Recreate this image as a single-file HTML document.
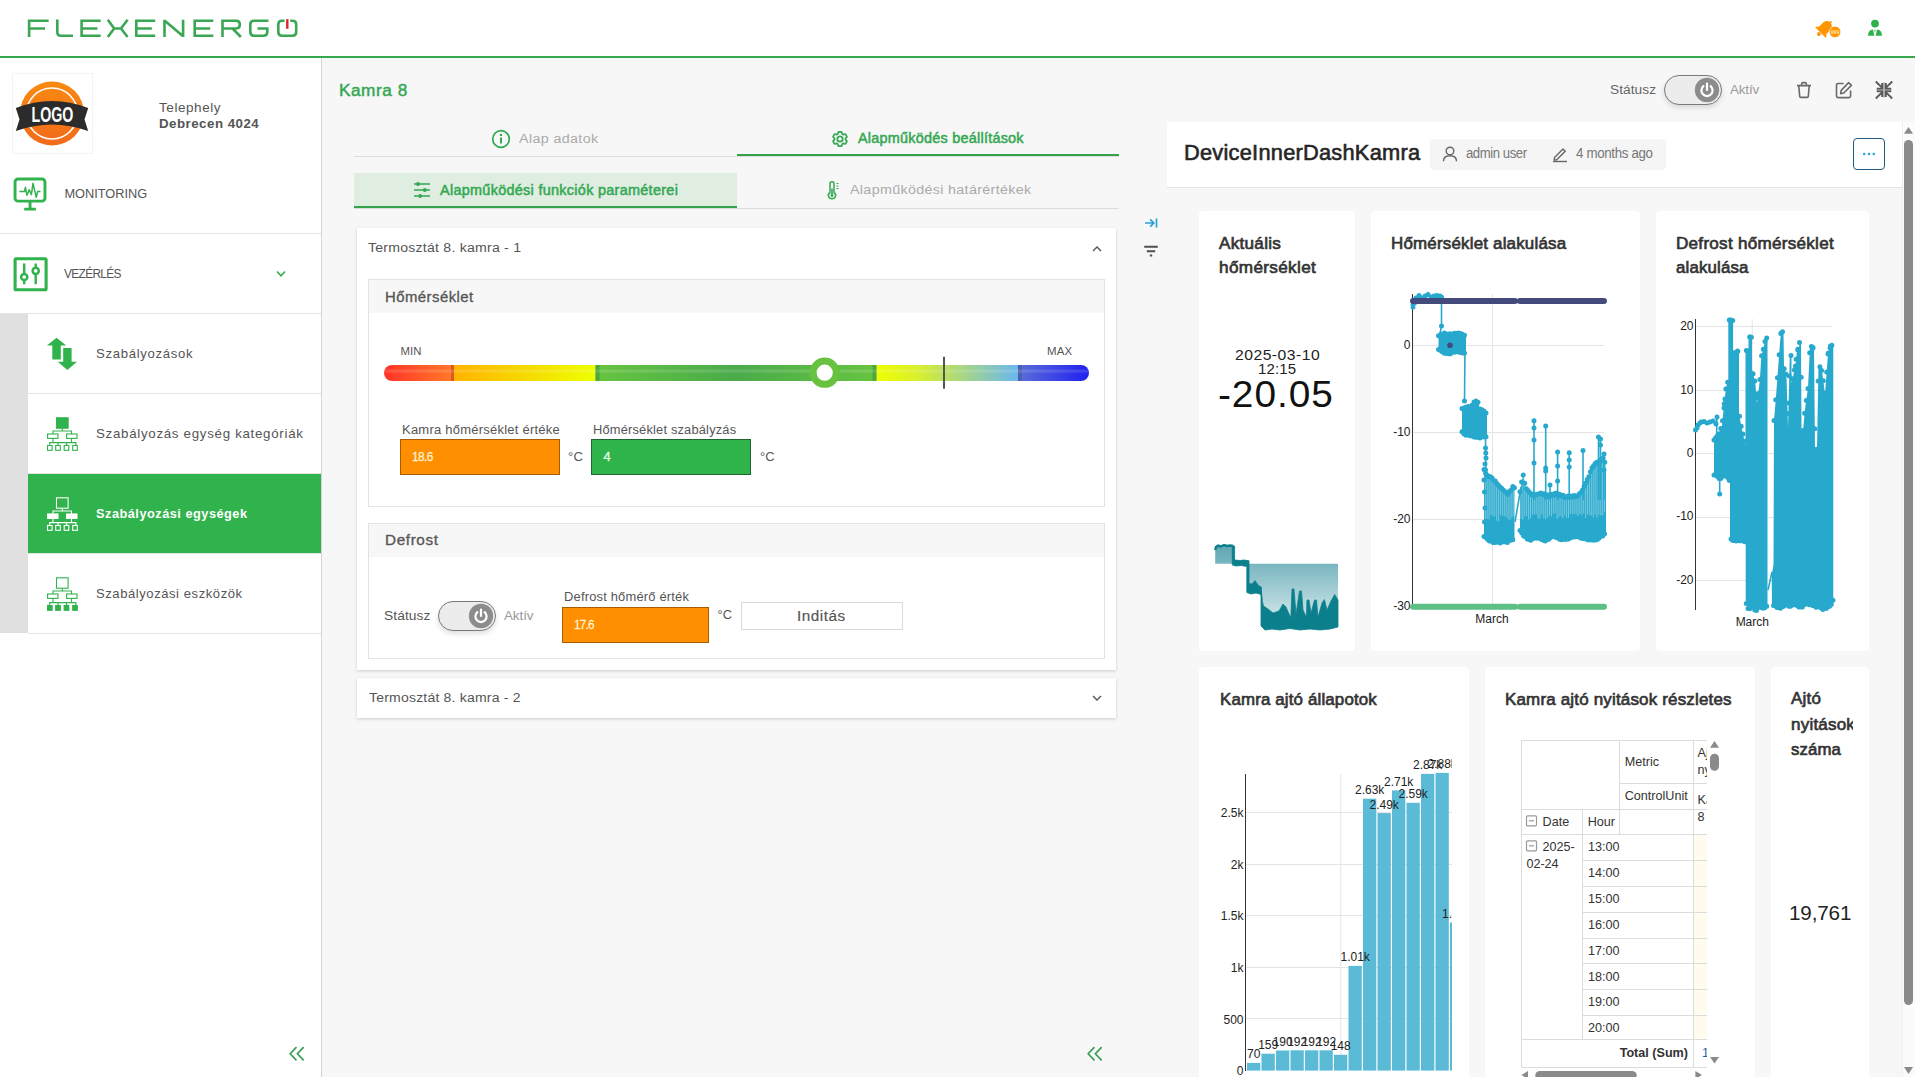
<!DOCTYPE html>
<html><head><meta charset="utf-8">
<style>
*{box-sizing:border-box;margin:0;padding:0}
html,body{width:1915px;height:1077px;overflow:hidden;background:#f7f7f7;font-family:"Liberation Sans",sans-serif;color:#444}
div{position:absolute}
.t{white-space:nowrap}
svg{position:absolute;overflow:visible}
</style></head>
<body>
<div style="left:0;top:0;width:1915px;height:56px;background:#fff"></div><div style="left:0;top:56px;width:1915px;height:2px;background:#36a84f"></div><svg style="left:0;top:0" width="320" height="56" viewBox="0 0 320 56" fill="none" stroke="#3ba654" stroke-width="2.6">
<path d="M48.6,20.8 H29.1 V37 M29.1,28.5 H45"/>
<path d="M57.3,19.5 V32.2 Q57.3,35.7 60.8,35.7 H73"/>
<path d="M100.7,20.8 H81.6 V35.7 H100.7 M81.6,28.5 H97.4"/>
<path d="M107.8,19.8 L114.2,28.5 L107.8,37 M127.6,19.8 L121,28.5 L127.6,37 M114,28.5 H121.2"/>
<path d="M155.2,20.8 H136.3 V35.7 H155.2 M136.3,28.5 H151.8"/>
<path d="M164.5,37 V19.8 M164.5,20.5 L183.1,36.3 M183.1,37 V19.8"/>
<path d="M213.3,20.8 H194.7 V35.7 H213.3 M194.7,28.5 H210.2"/>
<path d="M222.5,37 V20.8 H236.3 Q239.8,20.8 239.8,24.6 Q239.8,28.5 236.3,28.5 H222.5 M232.5,28.5 L240.9,37"/>
<path d="M268.5,20.8 H254 Q250.3,20.8 250.3,24.5 V32 Q250.3,35.7 254,35.7 H263.6 Q267.3,35.7 267.3,32 V28.5 H257.5"/>
<path d="M284.5,20.8 H282 Q278.3,20.8 278.3,24.5 V32 Q278.3,35.7 282,35.7 H292.5 Q296.2,35.7 296.2,32 V24.5 Q296.2,20.8 292.5,20.8 H290.2"/>
<path d="M287.3,19.2 V28.8" stroke="#d9262b" stroke-width="2.4"/>
</svg><svg style="left:1812px;top:18px" width="32" height="22" viewBox="0 0 32 22">
<g transform="rotate(45 12 11)" fill="#ff9500">
<path d="M12,2 C8.6,2 6.8,4.6 6.8,8 V12.5 L4.2,16 H19.8 L17.2,12.5 V8 C17.2,4.6 15.4,2 12,2 Z"/>
<rect x="11" y="0.3" width="2" height="2.5" rx="1"/>
<circle cx="12" cy="18.2" r="1.9"/>
</g>
<circle cx="23" cy="13.9" r="5.7" fill="#ff9500" stroke="#fff" stroke-width="0.6"/>
<text x="23" y="15.7" font-size="5.2" font-family="Liberation Sans" font-weight="700" fill="#ffe3a6" text-anchor="middle">999</text>
</svg><svg style="left:1866px;top:18px" width="18" height="20" viewBox="0 0 18 20" fill="#2fb14b">
<circle cx="9" cy="5.6" r="3.9"/>
<path d="M2,17.8 Q2,12 7,11.6 L8.3,17.8 Z M16,17.8 Q16,12 11,11.6 L9.7,17.8 Z M8.4,11.8 H9.6 V13.4 H8.4 Z"/>
</svg><div style="left:0;top:58px;width:321px;height:1019px;background:#fff"></div><div style="left:321px;top:58px;width:1px;height:1019px;background:#d4d4d4"></div><div style="left:12px;top:73px;width:81px;height:81px;border:1px solid #f4f4f4;background:#fff"></div><svg style="left:12px;top:73px" width="81" height="81" viewBox="0 0 81 81">
<defs><linearGradient id="og" x1="0" y1="0" x2="0" y2="1"><stop offset="0" stop-color="#f98a10"/><stop offset="1" stop-color="#f26a1b"/></linearGradient></defs>
<circle cx="40" cy="40.5" r="32" fill="url(#og)"/>
<circle cx="40" cy="40.5" r="25.5" fill="none" stroke="#fff" stroke-width="1.6"/>
<path d="M3.8,35 Q40,21 76.2,35 L72.5,46.5 L76.2,58 Q40,45 3.8,58 L7.5,46.5 Z" fill="#2b2b2b"/>
<text x="40.5" y="48.7" font-family="Liberation Sans" font-weight="700" font-size="14" fill="#fff" text-anchor="middle" textLength="41.8" lengthAdjust="spacingAndGlyphs" transform="translate(40 48.7) scale(1 1.6) translate(-40 -48.7)">LOGO</text>
</svg><div class="t" style="left:158.9px;top:102.02px;font-size:12.5px;line-height:12.5px;color:#555;letter-spacing:0.502px;transform:scaleX(1.0823);transform-origin:0 0;">Telephely</div>
<div class="t" style="left:158.9px;top:118.12px;font-size:12.5px;line-height:12.5px;color:#555;font-weight:700;letter-spacing:0.448px;transform:scaleX(1.0649);transform-origin:0 0;">Debrecen 4024</div>
<div style="left:0;top:233px;width:321px;height:1px;background:#e3e3e3"></div><div style="left:0;top:313px;width:321px;height:1px;background:#e3e3e3"></div><div style="left:0;top:314px;width:28px;height:319px;background:#e0e0e0"></div><div style="left:28px;top:393px;width:293px;height:1px;background:#e3e3e3"></div><div style="left:28px;top:473px;width:293px;height:1px;background:#e3e3e3"></div><div style="left:28px;top:553px;width:293px;height:1px;background:#e3e3e3"></div><div style="left:28px;top:633px;width:293px;height:1px;background:#e3e3e3"></div><div style="left:28px;top:474px;width:293px;height:79px;background:#30b24c"></div><svg style="left:12px;top:176px" width="36" height="36" viewBox="0 0 36 36" fill="none" stroke="#30b24c">
<rect x="3.05" y="2.95" width="29.9" height="22.2" rx="3" stroke-width="2.9"/>
<path d="M18.05,25.5 V32 M12.2,33.1 H23.9" stroke-width="2.9"/>
<path d="M7.4,15.5 H12.5 L13.4,11.3 L15,19.3 L17.2,13.7 L19.4,18.6 L21,7.3 L24.2,21.2 L25.7,15.5 H28.5" stroke-width="1.5" stroke-linejoin="round"/>
</svg><div class="t" style="left:64.4px;top:188.17px;font-size:12.79px;line-height:12.79px;color:#555;letter-spacing:-0.015px;">MONITORING</div>
<svg style="left:12px;top:256px" width="36" height="36" viewBox="0 0 36 36" fill="none" stroke="#30b24c">
<rect x="3.1" y="2.8" width="31" height="31" rx="1" stroke-width="3.1"/>
<path d="M12.2,7.5 V28.2 M23.7,7.5 V28.2" stroke-width="2.4"/>
<circle cx="12.2" cy="21" r="3.1" fill="#fff" stroke-width="2.5"/>
<circle cx="23.7" cy="14.8" r="3.1" fill="#fff" stroke-width="2.5"/>
</svg><div class="t" style="left:64.4px;top:267.67px;font-size:12.79px;line-height:12.79px;color:#555;letter-spacing:-0.711px;transform:scaleX(0.9307);transform-origin:0 0;">VEZÉRLÉS</div>
<svg style="left:275px;top:269px" width="12" height="10" viewBox="0 0 12 10" fill="none" stroke="#30b24c" stroke-width="1.7"><path d="M2,2.5 L6,6.8 L10,2.5"/></svg><svg style="left:44px;top:335px" width="36" height="38" viewBox="0 0 36 38" fill="#30b24c">
<path d="M2.9,10.5 L12.6,2.7 L22.2,10.5 H16.8 V24.4 H8.3 V10.5 Z"/>
<path d="M19.2,12.9 H27.6 V26.8 H33 L23.4,34.9 L13.7,26.8 H19.2 Z"/>
</svg><svg style="left:46px;top:416px" width="34" height="36" viewBox="0 0 34 36" fill="none" stroke="#30b24c" stroke-width="1.1"><rect x="10.5" y="1.8" width="11.6" height="10.4" fill="#30b24c"/><path d="M16.3,12.2 V15 M7,18 V15 H25.5 V18 M7,22.4 V26.6 M25.5,22.4 V26.6 M3.7,29.5 V26.6 H29.9 V29.5 M12,29.5 V26.6 M20.6,29.5 V26.6"/><rect x="1.6" y="18" width="10.4" height="4.4" fill="#fff"/><rect x="20.6" y="18" width="10.4" height="4.4" fill="#fff"/><rect x="1.5" y="29.5" width="4.6" height="4.8" fill="#fff"/><rect x="9.7" y="29.5" width="4.6" height="4.8" fill="#fff"/><rect x="18.2" y="29.5" width="4.6" height="4.8" fill="#fff"/><rect x="26.7" y="29.5" width="4.6" height="4.8" fill="#fff"/></svg><svg style="left:46px;top:496px" width="34" height="36" viewBox="0 0 34 36" fill="none" stroke="#fff" stroke-width="1.1"><rect x="10.5" y="1.8" width="11.6" height="10.4" fill="#30b24c"/><path d="M16.3,12.2 V15 M7,18 V15 H25.5 V18 M7,22.4 V26.6 M25.5,22.4 V26.6 M3.7,29.5 V26.6 H29.9 V29.5 M12,29.5 V26.6 M20.6,29.5 V26.6"/><rect x="1.6" y="18" width="10.4" height="4.4" fill="#fff"/><rect x="20.6" y="18" width="10.4" height="4.4" fill="#fff"/><rect x="1.5" y="29.5" width="4.6" height="4.8" fill="#30b24c"/><rect x="9.7" y="29.5" width="4.6" height="4.8" fill="#30b24c"/><rect x="18.2" y="29.5" width="4.6" height="4.8" fill="#30b24c"/><rect x="26.7" y="29.5" width="4.6" height="4.8" fill="#30b24c"/></svg><svg style="left:46px;top:576px" width="34" height="36" viewBox="0 0 34 36" fill="none" stroke="#30b24c" stroke-width="1.1"><rect x="10.5" y="1.8" width="11.6" height="10.4" fill="#fff"/><path d="M16.3,12.2 V15 M7,18 V15 H25.5 V18 M7,22.4 V26.6 M25.5,22.4 V26.6 M3.7,29.5 V26.6 H29.9 V29.5 M12,29.5 V26.6 M20.6,29.5 V26.6"/><rect x="1.6" y="18" width="10.4" height="4.4" fill="#fff"/><rect x="20.6" y="18" width="10.4" height="4.4" fill="#fff"/><rect x="1.5" y="29.5" width="4.6" height="4.8" fill="#30b24c"/><rect x="9.7" y="29.5" width="4.6" height="4.8" fill="#30b24c"/><rect x="18.2" y="29.5" width="4.6" height="4.8" fill="#30b24c"/><rect x="26.7" y="29.5" width="4.6" height="4.8" fill="#30b24c"/></svg><div class="t" style="left:96.3px;top:348.71px;font-size:11.92px;line-height:11.92px;color:#555;letter-spacing:0.622px;transform:scaleX(1.1028);transform-origin:0 0;">Szabályozások</div>
<div class="t" style="left:96.3px;top:428.91px;font-size:11.92px;line-height:11.92px;color:#555;letter-spacing:0.630px;transform:scaleX(1.1178);transform-origin:0 0;">Szabályozás egység kategóriák</div>
<div class="t" style="left:96.3px;top:508.91px;font-size:11.92px;line-height:11.92px;color:#fff;font-weight:700;letter-spacing:0.451px;transform:scaleX(1.0735);transform-origin:0 0;">Szabályozási egységek</div>
<div class="t" style="left:96.3px;top:588.91px;font-size:11.92px;line-height:11.92px;color:#555;letter-spacing:0.525px;transform:scaleX(1.0933);transform-origin:0 0;">Szabályozási eszközök</div>
<svg style="left:288.3px;top:1045.7px" width="18" height="16" viewBox="0 0 18 16" fill="none" stroke="#3d9d57" stroke-width="1.7" stroke-linecap="round"><path d="M8,1.6 L2.2,7.75 L8,13.9 M15.2,1.6 L9.4,7.75 L15.2,13.9"/></svg><div class="t" style="left:338.6px;top:81.90px;font-size:16.42px;line-height:16.42px;color:#34a853;-webkit-text-stroke:0.45px #34a853;letter-spacing:0.494px;transform:scaleX(1.0502);transform-origin:0 0;">Kamra 8</div>
<div class="t" style="left:1610.2px;top:83.23px;font-size:13.66px;line-height:13.66px;color:#666;letter-spacing:0.042px;transform:scaleX(1.0056);transform-origin:0 0;">Státusz</div>
<div style="left:1664px;top:75.2px;width:58px;height:29.5px;border-radius:15px;border:1px solid #7a7a7a;background:#ececec;box-shadow:0 3px 5px rgba(0,0,0,0.12)"></div><svg style="left:1693.8px;top:76.95px" width="26" height="26" viewBox="0 0 26 26">
<circle cx="13" cy="13" r="12.2" fill="#8c8c8c"/>
<path d="M9.4,9.2 A5.6,5.6 0 1 0 16.6,9.2" fill="none" stroke="#fff" stroke-width="2.2" stroke-linecap="round"/>
<path d="M13,6.6 V13" stroke="#fff" stroke-width="2.2" stroke-linecap="round"/>
</svg><div class="t" style="left:1729.7px;top:83.23px;font-size:13.66px;line-height:13.66px;color:#9a9a9a;letter-spacing:-0.147px;transform:scaleX(0.9811);transform-origin:0 0;">Aktív</div>
<svg style="left:1795px;top:80px" width="18" height="20" viewBox="0 0 18 20" fill="none" stroke="#6a6a6a" stroke-width="1.6" stroke-linejoin="round">
<path d="M2,5.6 H16 M6.6,5.4 V4 Q6.6,2.6 8,2.6 H10 Q11.4,2.6 11.4,4 V5.4 M3.8,5.6 L4.7,16.4 Q4.8,17.4 5.8,17.4 H12.2 Q13.2,17.4 13.3,16.4 L14.2,5.6"/>
</svg><svg style="left:1834px;top:80px" width="20" height="20" viewBox="0 0 20 20" fill="none" stroke="#6a6a6a" stroke-width="1.6" stroke-linejoin="round" stroke-linecap="round">
<path d="M9,3.5 H4 Q2.5,3.5 2.5,5 V16 Q2.5,17.6 4,17.6 H15 Q16.6,17.6 16.6,16 V11"/>
<path d="M14.6,2.6 L17.4,5.4 L9.8,13 L6.6,13.6 L7.2,10.4 Z"/>
</svg><svg style="left:1874px;top:80px" width="20" height="20" viewBox="0 0 20 20" fill="none" stroke-width="1.9">
<path d="M10,2.5 V17.5 M2.5,10 H17.5" stroke="#b5b5b5" stroke-width="2.2"/>
<path d="M1.8,1.5 L8,7.7 M8.2,3 V8.6 H2.8 M18.2,1.5 L12,7.7 M11.8,3 V8.6 H17.2 M1.8,18.5 L8,12.3 M8.2,17 V11.4 H2.8 M18.2,18.5 L12,12.3 M11.8,17 V11.4 H17.2" stroke="#5a5a5a"/>
</svg><div style="left:354px;top:156px;width:765px;height:1px;background:#dcdcdc"></div><div style="left:737px;top:154px;width:382px;height:2px;background:#33a24a"></div><svg style="left:490px;top:128px" width="22" height="22" viewBox="0 0 22 22" fill="none" stroke="#34a853" stroke-width="1.7">
<circle cx="11" cy="11" r="8.3"/><path d="M11,9.6 V15.4" stroke-width="2"/><circle cx="11" cy="6.9" r="0.6" fill="#34a853" stroke-width="1.2"/>
</svg><div class="t" style="left:518.8px;top:132.03px;font-size:13.66px;line-height:13.66px;color:#aaaaaa;letter-spacing:0.336px;transform:scaleX(1.0487);transform-origin:0 0;">Alap adatok</div>
<svg style="left:828px;top:126.8px" width="24" height="24" viewBox="0 0 24 24" fill="none" stroke="#34a853" stroke-width="1.75" stroke-linejoin="round"><path d="M17.50,12.00 L17.50,12.14 L17.49,12.29 L17.48,12.43 L17.47,12.57 L17.54,12.73 L17.74,12.91 L17.96,13.10 L18.19,13.32 L18.44,13.55 L18.68,13.79 L18.90,14.04 L18.85,14.22 L18.79,14.40 L18.72,14.58 L18.65,14.76 L18.58,14.93 L18.50,15.10 L18.42,15.27 L18.33,15.44 L18.24,15.60 L18.14,15.76 L18.04,15.92 L17.93,16.08 L17.82,16.23 L17.71,16.38 L17.60,16.53 L17.47,16.68 L17.35,16.82 L17.22,16.96 L16.89,16.89 L16.56,16.80 L16.24,16.71 L15.94,16.61 L15.66,16.52 L15.40,16.43 L15.23,16.45 L15.12,16.53 L15.00,16.61 L14.87,16.69 L14.75,16.76 L14.62,16.83 L14.50,16.90 L14.37,16.96 L14.24,17.02 L14.14,17.16 L14.08,17.43 L14.02,17.71 L13.96,18.02 L13.88,18.35 L13.79,18.68 L13.68,19.00 L13.50,19.04 L13.31,19.08 L13.13,19.11 L12.94,19.14 L12.75,19.16 L12.56,19.18 L12.38,19.19 L12.19,19.20 L12.00,19.20 L11.81,19.20 L11.62,19.19 L11.44,19.18 L11.25,19.16 L11.06,19.14 L10.87,19.11 L10.69,19.08 L10.50,19.04 L10.32,19.00 L10.21,18.68 L10.12,18.35 L10.04,18.02 L9.98,17.71 L9.92,17.43 L9.86,17.16 L9.76,17.02 L9.63,16.96 L9.50,16.90 L9.38,16.83 L9.25,16.76 L9.13,16.69 L9.00,16.61 L8.88,16.53 L8.77,16.45 L8.60,16.43 L8.34,16.52 L8.06,16.61 L7.76,16.71 L7.44,16.80 L7.11,16.89 L6.78,16.96 L6.65,16.82 L6.53,16.68 L6.40,16.53 L6.29,16.38 L6.18,16.23 L6.07,16.08 L5.96,15.92 L5.86,15.76 L5.76,15.60 L5.67,15.44 L5.58,15.27 L5.50,15.10 L5.42,14.93 L5.35,14.76 L5.28,14.58 L5.21,14.40 L5.15,14.22 L5.10,14.04 L5.32,13.79 L5.56,13.55 L5.81,13.32 L6.04,13.10 L6.26,12.91 L6.46,12.73 L6.53,12.57 L6.52,12.43 L6.51,12.29 L6.50,12.14 L6.50,12.00 L6.50,11.86 L6.51,11.71 L6.52,11.57 L6.53,11.43 L6.46,11.27 L6.26,11.09 L6.04,10.90 L5.81,10.68 L5.56,10.45 L5.32,10.21 L5.10,9.96 L5.15,9.78 L5.21,9.60 L5.28,9.42 L5.35,9.24 L5.42,9.07 L5.50,8.90 L5.58,8.73 L5.67,8.56 L5.76,8.40 L5.86,8.24 L5.96,8.08 L6.07,7.92 L6.18,7.77 L6.29,7.62 L6.40,7.47 L6.53,7.32 L6.65,7.18 L6.78,7.04 L7.11,7.11 L7.44,7.20 L7.76,7.29 L8.06,7.39 L8.34,7.48 L8.60,7.57 L8.77,7.55 L8.88,7.47 L9.00,7.39 L9.13,7.31 L9.25,7.24 L9.38,7.17 L9.50,7.10 L9.63,7.04 L9.76,6.98 L9.86,6.84 L9.92,6.57 L9.98,6.29 L10.04,5.98 L10.12,5.65 L10.21,5.32 L10.32,5.00 L10.50,4.96 L10.69,4.92 L10.87,4.89 L11.06,4.86 L11.25,4.84 L11.44,4.82 L11.62,4.81 L11.81,4.80 L12.00,4.80 L12.19,4.80 L12.38,4.81 L12.56,4.82 L12.75,4.84 L12.94,4.86 L13.13,4.89 L13.31,4.92 L13.50,4.96 L13.68,5.00 L13.79,5.32 L13.88,5.65 L13.96,5.98 L14.02,6.29 L14.08,6.57 L14.14,6.84 L14.24,6.98 L14.37,7.04 L14.50,7.10 L14.62,7.17 L14.75,7.24 L14.87,7.31 L15.00,7.39 L15.12,7.47 L15.23,7.55 L15.40,7.57 L15.66,7.48 L15.94,7.39 L16.24,7.29 L16.56,7.20 L16.89,7.11 L17.22,7.04 L17.35,7.18 L17.47,7.32 L17.60,7.47 L17.71,7.62 L17.82,7.77 L17.93,7.92 L18.04,8.08 L18.14,8.24 L18.24,8.40 L18.33,8.56 L18.42,8.73 L18.50,8.90 L18.58,9.07 L18.65,9.24 L18.72,9.42 L18.79,9.60 L18.85,9.78 L18.90,9.96 L18.68,10.21 L18.44,10.45 L18.19,10.68 L17.96,10.90 L17.74,11.09 L17.54,11.27 L17.47,11.43 L17.48,11.57 L17.49,11.71 L17.50,11.86 Z"/><circle cx="12" cy="12" r="2.7"/></svg><div class="t" style="left:857.8px;top:132.39px;font-size:13.95px;line-height:13.95px;color:#34a853;-webkit-text-stroke:0.5px #34a853;letter-spacing:0.234px;transform:scaleX(1.0342);transform-origin:0 0;">Alapműködés beállítások</div>
<div style="left:354px;top:208px;width:765px;height:1px;background:#dcdcdc"></div><div style="left:354px;top:173px;width:383px;height:34px;background:#dfeee1"></div><div style="left:354px;top:206px;width:383px;height:2px;background:#33a24a"></div><svg style="left:412px;top:180px" width="20" height="20" viewBox="0 0 20 20" fill="#34a853" stroke="#34a853">
<path d="M2,4 H18 M2,10 H18 M2,16 H18" stroke-width="1.6"/>
<circle cx="6" cy="4" r="2" stroke="none"/><circle cx="12.8" cy="10" r="2" stroke="none"/><circle cx="8.2" cy="16" r="2" stroke="none"/>
</svg><div class="t" style="left:439.7px;top:183.61px;font-size:13.81px;line-height:13.81px;color:#34a853;-webkit-text-stroke:0.5px #34a853;letter-spacing:0.289px;transform:scaleX(1.0441);transform-origin:0 0;">Alapműködési funkciók paraméterei</div>
<svg style="left:826px;top:180px" width="14" height="20" viewBox="0 0 14 20" fill="none" stroke="#34a853" stroke-width="1.5">
<path d="M4,12.5 V3.5 Q4,1.7 6,1.7 Q8,1.7 8,3.5 V12.5 Q10.3,14 9.5,16.5 Q8.6,18.8 6,18.8 Q3.4,18.8 2.5,16.5 Q1.7,14 4,12.5 Z"/>
<path d="M6,8.5 V15.5" stroke-width="1.6"/><circle cx="6" cy="15.5" r="1.4" fill="#34a853" stroke="none"/>
<path d="M10.5,3.5 H12.5 M10.5,6 H12.5 M10.5,8.5 H12.5" stroke-width="1"/>
</svg><div class="t" style="left:850.1px;top:183.43px;font-size:13.66px;line-height:13.66px;color:#aaaaaa;letter-spacing:0.312px;transform:scaleX(1.0473);transform-origin:0 0;">Alapműködési határértékek</div>
<svg style="left:1143px;top:216px" width="16" height="14" viewBox="0 0 16 14" fill="none" stroke="#29a0d8" stroke-width="1.7">
<path d="M2,7 H10.5 M7.2,3.4 L10.8,7 L7.2,10.6 M13.5,2.5 V11.5"/>
</svg><svg style="left:1143px;top:244px" width="16" height="14" viewBox="0 0 16 14" fill="none" stroke="#505050" stroke-width="2">
<path d="M1.2,2.8 H14.8 M3.8,7.2 H12.2 M6.8,11.6 H9.2"/>
</svg><div style="left:357px;top:228px;width:759px;height:442px;background:#fff;box-shadow:0 1px 3px rgba(0,0,0,0.18)"></div><div class="t" style="left:368.2px;top:240.53px;font-size:13.66px;line-height:13.66px;color:#555;letter-spacing:0.211px;transform:scaleX(1.0334);transform-origin:0 0;">Termosztát 8. kamra - 1</div>
<svg style="left:1090px;top:243.5px" width="14" height="10" viewBox="0 0 14 10" fill="none" stroke="#555" stroke-width="1.4"><path d="M3,7 L7,3 L11,7"/></svg><div style="left:368px;top:279px;width:737px;height:228px;border:1px solid #e2e2e2;background:#fff"></div><div style="left:369px;top:280px;width:735px;height:33px;background:#f7f7f7"></div><div class="t" style="left:384.6px;top:289.86px;font-size:14.1px;line-height:14.1px;color:#555;-webkit-text-stroke:0.3px #555;letter-spacing:0.433px;transform:scaleX(1.0579);transform-origin:0 0;">Hőmérséklet</div>
<div class="t" style="left:400.5px;top:346.40px;font-size:11.34px;line-height:11.34px;color:#555;letter-spacing:0.022px;">MIN</div>
<div class="t" style="left:1047.4px;top:346.20px;font-size:11.34px;line-height:11.34px;color:#555;letter-spacing:0.127px;transform:scaleX(1.0105);transform-origin:0 0;">MAX</div>
<svg style="left:380px;top:350px" width="716" height="50" viewBox="0 0 716 50">
<defs>
<linearGradient id="s1" x1="0" x2="1"><stop offset="0" stop-color="#ff3328"/><stop offset="1" stop-color="#ff7a28"/></linearGradient>
<linearGradient id="s2" x1="0" x2="1"><stop offset="0" stop-color="#ffb300"/><stop offset="1" stop-color="#eeff00"/></linearGradient>
<linearGradient id="s3" x1="0" x2="1"><stop offset="0" stop-color="#66c440"/><stop offset="0.5" stop-color="#4aab4c"/><stop offset="1" stop-color="#66c440"/></linearGradient>
<linearGradient id="s4" x1="0" x2="1"><stop offset="0" stop-color="#eeff00"/><stop offset="0.3" stop-color="#d8ef30"/><stop offset="1" stop-color="#6ab7f0"/></linearGradient>
<linearGradient id="s5" x1="0" x2="1"><stop offset="0" stop-color="#5a6fd8"/><stop offset="1" stop-color="#2020f0"/></linearGradient>
<clipPath id="bc"><rect x="4" y="15" width="705" height="16" rx="8"/></clipPath>
</defs>
<g clip-path="url(#bc)">
<rect x="4" y="15" width="70" height="16" fill="url(#s1)"/>
<rect x="71" y="15" width="3" height="16" fill="#e05a20"/>
<rect x="74" y="15" width="141.5" height="16" fill="url(#s2)"/>
<rect x="215.5" y="15" width="281" height="16" fill="url(#s3)"/>
<rect x="215.5" y="15" width="4" height="16" fill="#4fa83a"/>
<rect x="496.5" y="15" width="141.5" height="16" fill="url(#s4)"/>
<rect x="492.5" y="15" width="4" height="16" fill="#4fa83a"/>
<rect x="638" y="15" width="71" height="16" fill="url(#s5)"/>
<rect x="638" y="15" width="4" height="16" fill="#5060b0"/>
<rect x="4" y="19.5" width="705" height="3.2" fill="#fff" opacity="0.13"/>
</g>
<path d="M564,6.7 V38.8" stroke="#555" stroke-width="2"/>
<circle cx="444.7" cy="22.7" r="11.6" fill="#fff" stroke="#67c23f" stroke-width="7"/>
</svg><div class="t" style="left:401.5px;top:423.62px;font-size:12.5px;line-height:12.5px;color:#555;letter-spacing:0.233px;transform:scaleX(1.0379);transform-origin:0 0;">Kamra hőmérséklet értéke</div>
<div style="left:400px;top:439px;width:160px;height:36px;background:#ff8f00;border:1px solid #a85e00"></div><div class="t" style="left:411.9px;top:450.97px;font-size:12.79px;line-height:12.79px;color:#fff3cf;-webkit-text-stroke:0.3px #fff3cf;letter-spacing:-0.649px;transform:scaleX(0.9275);transform-origin:0 0;">18.6</div>
<div class="t" style="left:567.5px;top:450.97px;font-size:12.79px;line-height:12.79px;color:#555;letter-spacing:0.360px;transform:scaleX(1.0257);transform-origin:0 0;">°C</div>
<div class="t" style="left:592.6px;top:423.62px;font-size:12.5px;line-height:12.5px;color:#555;letter-spacing:0.177px;transform:scaleX(1.0282);transform-origin:0 0;">Hőmérséklet szabályzás</div>
<div style="left:591px;top:439px;width:160px;height:36px;background:#2fb34b;border:1px solid #1d6630"></div><div class="t" style="left:603.5px;top:450.97px;font-size:12.79px;line-height:12.79px;color:#e8ffe8;-webkit-text-stroke:0.3px #e8ffe8;">4</div>
<div class="t" style="left:759.7px;top:450.97px;font-size:12.79px;line-height:12.79px;color:#555;letter-spacing:0.118px;transform:scaleX(1.0083);transform-origin:0 0;">°C</div>
<div style="left:368px;top:523px;width:737px;height:136px;border:1px solid #e2e2e2;background:#fff"></div><div style="left:369px;top:524px;width:735px;height:33px;background:#f7f7f7"></div><div class="t" style="left:384.5px;top:533.46px;font-size:14.1px;line-height:14.1px;color:#555;-webkit-text-stroke:0.3px #555;letter-spacing:0.581px;transform:scaleX(1.0831);transform-origin:0 0;">Defrost</div>
<div class="t" style="left:384.4px;top:608.83px;font-size:13.66px;line-height:13.66px;color:#555;letter-spacing:0.067px;transform:scaleX(1.0089);transform-origin:0 0;">Státusz</div>
<div style="left:438px;top:601px;width:58px;height:29.5px;border-radius:15px;border:1px solid #7a7a7a;background:#ececec;box-shadow:0 3px 5px rgba(0,0,0,0.12)"></div><svg style="left:467.8px;top:602.75px" width="26" height="26" viewBox="0 0 26 26">
<circle cx="13" cy="13" r="12.2" fill="#8c8c8c"/>
<path d="M9.4,9.2 A5.6,5.6 0 1 0 16.6,9.2" fill="none" stroke="#fff" stroke-width="2.2" stroke-linecap="round"/>
<path d="M13,6.6 V13" stroke="#fff" stroke-width="2.2" stroke-linecap="round"/>
</svg><div class="t" style="left:503.5px;top:608.83px;font-size:13.66px;line-height:13.66px;color:#9a9a9a;letter-spacing:-0.108px;transform:scaleX(0.9860);transform-origin:0 0;">Aktív</div>
<div class="t" style="left:563.9px;top:591.22px;font-size:12.5px;line-height:12.5px;color:#555;letter-spacing:0.191px;transform:scaleX(1.0319);transform-origin:0 0;">Defrost hőmérő érték</div>
<div style="left:562px;top:607px;width:147px;height:36px;background:#ff8f00;border:1px solid #a85e00"></div><div class="t" style="left:573.9px;top:618.77px;font-size:12.79px;line-height:12.79px;color:#fff3cf;-webkit-text-stroke:0.3px #fff3cf;letter-spacing:-0.807px;transform:scaleX(0.9114);transform-origin:0 0;">17.6</div>
<div class="t" style="left:717.5px;top:609.27px;font-size:12.79px;line-height:12.79px;color:#555;letter-spacing:0.019px;">°C</div>
<div style="left:741px;top:602px;width:162px;height:28px;background:#fff;border:1px solid #dadada"></div><div class="t" style="left:797.3px;top:608.94px;font-size:14.24px;line-height:14.24px;color:#555;-webkit-text-stroke:0.15px #555;letter-spacing:0.478px;transform:scaleX(1.0737);transform-origin:0 0;">Inditás</div>
<div style="left:357px;top:678px;width:759px;height:40px;background:#fff;box-shadow:0 1px 3px rgba(0,0,0,0.18)"></div><div class="t" style="left:369.0px;top:690.53px;font-size:13.66px;line-height:13.66px;color:#555;letter-spacing:0.179px;transform:scaleX(1.0282);transform-origin:0 0;">Termosztát 8. kamra - 2</div>
<svg style="left:1090px;top:693px" width="14" height="10" viewBox="0 0 14 10" fill="none" stroke="#555" stroke-width="1.4"><path d="M3,3 L7,7 L11,3"/></svg><svg style="left:1086.3px;top:1045.7px" width="18" height="16" viewBox="0 0 18 16" fill="none" stroke="#3d9d57" stroke-width="1.7" stroke-linecap="round"><path d="M8,1.6 L2.2,7.75 L8,13.9 M15.2,1.6 L9.4,7.75 L15.2,13.9"/></svg><div style="left:1167px;top:122px;width:735px;height:65.5px;background:#fff;border-bottom:1.5px solid #e2e2e2"></div><div style="left:1902px;top:122px;width:13px;height:955px;background:#fbfbfb;border-left:1px solid #f0f0f0"></div><svg style="left:1902px;top:122px" width="13" height="955" viewBox="0 0 13 955" fill="#8a8a8a">
<path d="M2,11.7 L6.5,5 L11,11.7 Z"/>
<rect x="2" y="18" width="9" height="865" rx="4.5"/>
<path d="M2,945 L6.5,952 L11,945 Z"/>
</svg><div class="t" style="left:1183.8px;top:143.41px;font-size:21.37px;line-height:21.37px;color:#262626;-webkit-text-stroke:0.6px #262626;letter-spacing:0.240px;transform:scaleX(1.0205);transform-origin:0 0;">DeviceInnerDashKamra</div>
<div style="left:1430px;top:138.5px;width:236px;height:31px;background:#f5f5f5;border-radius:4px"></div><svg style="left:1441px;top:145px" width="18" height="18" viewBox="0 0 18 18" fill="none" stroke="#666" stroke-width="1.4">
<circle cx="9" cy="6" r="3.8"/><path d="M2.5,16.2 Q2.5,10.8 9,10.8 Q15.5,10.8 15.5,16.2"/>
</svg><div class="t" style="left:1466.1px;top:147.49px;font-size:13.95px;line-height:13.95px;color:#777;letter-spacing:-0.469px;transform:scaleX(0.9426);transform-origin:0 0;">admin user</div>
<svg style="left:1551px;top:145px" width="18" height="18" viewBox="0 0 18 18" fill="none" stroke="#666" stroke-width="1.4" stroke-linejoin="round">
<path d="M3.5,12.5 L12,4 L14.2,6.2 L5.7,14.7 L3.2,15 Z"/><path d="M2,16.5 H16"/>
</svg><div class="t" style="left:1576.1px;top:147.49px;font-size:13.95px;line-height:13.95px;color:#777;letter-spacing:-0.358px;transform:scaleX(0.9556);transform-origin:0 0;">4 months ago</div>
<div style="left:1853px;top:138px;width:32px;height:32px;border:1.5px solid #1f5a82;border-radius:4px;background:#fff"></div><svg style="left:1853px;top:138px" width="32" height="32" viewBox="0 0 32 32" fill="#2aa3d8"><circle cx="11.2" cy="16" r="1.3"/><circle cx="16" cy="16" r="1.3"/><circle cx="20.8" cy="16" r="1.3"/></svg><div style="left:1199px;top:211px;width:156px;height:440px;background:#fff;border-radius:4px"></div><div style="left:1371px;top:211px;width:269px;height:440px;background:#fff;border-radius:4px"></div><div style="left:1656px;top:211px;width:213px;height:440px;background:#fff;border-radius:4px"></div><div style="left:1199px;top:667px;width:270px;height:420px;background:#fff;border-radius:4px"></div><div style="left:1485px;top:667px;width:270px;height:420px;background:#fff;border-radius:4px"></div><div style="left:1771px;top:667px;width:98px;height:420px;background:#fff;border-radius:4px"></div><div class="t" style="left:1219.3px;top:235.77px;font-size:16.57px;line-height:16.57px;color:#333;-webkit-text-stroke:0.65px #333;letter-spacing:0.268px;transform:scaleX(1.0333);transform-origin:0 0;">Aktuális</div>
<div class="t" style="left:1219.3px;top:260.47px;font-size:16.57px;line-height:16.57px;color:#333;-webkit-text-stroke:0.65px #333;letter-spacing:0.317px;transform:scaleX(1.0364);transform-origin:0 0;">hőmérséklet</div>
<div class="t" style="left:1390.5px;top:235.77px;font-size:16.57px;line-height:16.57px;color:#333;-webkit-text-stroke:0.65px #333;letter-spacing:0.185px;transform:scaleX(1.0225);transform-origin:0 0;">Hőmérséklet alakulása</div>
<div class="t" style="left:1676.3px;top:235.77px;font-size:16.57px;line-height:16.57px;color:#333;-webkit-text-stroke:0.65px #333;letter-spacing:0.255px;transform:scaleX(1.0318);transform-origin:0 0;">Defrost hőmérséklet</div>
<div class="t" style="left:1676.3px;top:260.47px;font-size:16.57px;line-height:16.57px;color:#333;-webkit-text-stroke:0.65px #333;letter-spacing:0.145px;transform:scaleX(1.0168);transform-origin:0 0;">alakulása</div>
<div class="t" style="left:1219.7px;top:691.67px;font-size:16.57px;line-height:16.57px;color:#333;-webkit-text-stroke:0.65px #333;letter-spacing:0.149px;transform:scaleX(1.0190);transform-origin:0 0;">Kamra ajtó állapotok</div>
<div class="t" style="left:1505.0px;top:691.67px;font-size:16.57px;line-height:16.57px;color:#333;-webkit-text-stroke:0.65px #333;letter-spacing:0.179px;transform:scaleX(1.0237);transform-origin:0 0;">Kamra ajtó nyitások részletes</div>
<div class="t" style="left:1791.0px;top:691.37px;font-size:16.57px;line-height:16.57px;color:#333;-webkit-text-stroke:0.65px #333;letter-spacing:0.227px;transform:scaleX(1.0244);transform-origin:0 0;">Ajtó</div>
<div style="left:1771px;top:700px;width:82px;height:50px;overflow:hidden"><div class="t" style="left:20.0px;top:16.57px;font-size:16.57px;line-height:16.57px;color:#333;-webkit-text-stroke:0.65px #333;letter-spacing:0.216px;transform:scaleX(1.0255);transform-origin:0 0;">nyitások</div>
</div><div class="t" style="left:1791.0px;top:741.77px;font-size:16.57px;line-height:16.57px;color:#333;-webkit-text-stroke:0.65px #333;letter-spacing:0.137px;transform:scaleX(1.0113);transform-origin:0 0;">száma</div>
<div class="t" style="left:1234.7px;top:348.34px;font-size:14.83px;line-height:14.83px;color:#222;letter-spacing:0.462px;transform:scaleX(1.0581);transform-origin:0 0;">2025-03-10</div>
<div class="t" style="left:1258.0px;top:362.44px;font-size:14.83px;line-height:14.83px;color:#222;letter-spacing:0.119px;transform:scaleX(1.0130);transform-origin:0 0;">12:15</div>
<div class="t" style="left:1217.6px;top:376.40px;font-size:37.21px;line-height:37.21px;color:#111;letter-spacing:0.893px;transform:scaleX(1.0442);transform-origin:0 0;">-20.05</div>
<div class="t" style="left:1788.7px;top:903.38px;font-size:20.93px;line-height:20.93px;color:#222;letter-spacing:-0.164px;transform:scaleX(0.9873);transform-origin:0 0;">19,761</div>
<svg style="left:0;top:0" width="1915" height="1077" viewBox="0 0 1915 1077"><g font-family="Liberation Sans" font-size="12" fill="#222"><path d="M1413,345.5 H1604" stroke="#e4e4e4" stroke-width="1"/><path d="M1413,432.5 H1604" stroke="#e4e4e4" stroke-width="1"/><path d="M1413,519.5 H1604" stroke="#e4e4e4" stroke-width="1"/><path d="M1492.5,294 V607" stroke="#e4e4e4" stroke-width="1"/><text x="1410.5" y="348.8" text-anchor="end">0</text><text x="1410.5" y="435.8" text-anchor="end">-10</text><text x="1410.5" y="523.0" text-anchor="end">-20</text><text x="1410.5" y="610.2" text-anchor="end">-30</text><text x="1492" y="622.6" text-anchor="middle">March</text></g><path d="M1412.5,294 V608" stroke="#333" stroke-width="1"/><path d="M1438.5,336.0 L1443.0,333.5 L1450.0,334.5 L1458.0,333.5 L1466.0,335.0 L1466.0,352.0 L1462.0,353.5 L1455.0,351.5 L1448.0,354.0 L1443.0,352.0 L1438.5,350.0 Z M1462.0,409.0 L1466.0,407.0 L1472.0,406.0 L1475.0,401.0 L1478.0,402.0 L1480.0,409.0 L1484.0,411.0 L1487.0,414.0 L1487.0,436.0 L1484.0,437.0 L1478.0,437.5 L1472.0,436.0 L1466.0,435.0 L1462.0,432.0 Z M1484.0,470.0 L1487.0,476.0 L1490.0,476.0 L1495.0,481.0 L1500.0,487.0 L1505.0,491.0 L1508.0,494.0 L1511.0,490.0 L1513.0,486.0 L1514.5,487.0 L1514.5,539.0 L1507.0,542.0 L1500.0,542.5 L1494.0,543.0 L1488.0,540.0 L1484.0,536.0 Z M1520.0,492.0 L1523.0,474.0 L1526.0,488.0 L1532.0,495.0 L1540.0,493.0 L1548.0,496.0 L1556.0,494.0 L1566.0,497.0 L1576.0,496.0 L1582.0,492.0 L1588.0,478.0 L1594.0,464.0 L1599.0,462.0 L1604.0,456.0 L1606.0,470.0 L1606.0,533.0 L1598.0,539.0 L1590.0,540.0 L1580.0,537.0 L1570.0,538.0 L1560.0,539.0 L1552.0,537.0 L1546.0,541.0 L1538.0,537.0 L1530.0,540.0 L1523.0,536.0 L1520.0,530.0 Z" fill="#27a8cd"/><path d="M1485.3,475.6 V519.2 M1487.2,479.0 V519.0 M1489.1,479.0 V519.6 M1491.0,480.0 V515.1 M1492.9,481.9 V516.5 M1494.8,483.8 V516.3 M1496.7,486.0 V520.7 M1498.6,488.3 V521.6 M1500.5,490.4 V515.4 M1502.4,491.9 V515.8 M1504.3,493.4 V516.5 M1506.2,495.2 V516.8 M1508.1,496.9 V519.0 M1510.0,494.3 V520.1 M1511.9,491.2 V517.8 M1513.8,489.5 V515.9 M1521.0,489.0 V518.8 M1522.9,477.6 V519.8 M1524.8,485.4 V516.3 M1526.7,491.8 V516.3 M1528.6,494.0 V519.5 M1530.5,496.3 V518.1 M1532.4,497.9 V514.7 M1534.3,497.4 V514.4 M1536.2,496.9 V514.5 M1538.1,496.5 V519.0 M1540.0,496.0 V518.4 M1541.9,496.7 V514.4 M1543.8,497.4 V518.4 M1545.7,498.1 V519.3 M1547.6,498.9 V517.3 M1549.5,498.6 V515.4 M1551.4,498.1 V516.6 M1553.3,497.7 V514.0 M1555.2,497.2 V513.3 M1557.1,497.3 V519.0 M1559.0,497.9 V517.0 M1560.9,498.5 V516.2 M1562.8,499.0 V518.6 M1564.7,499.6 V515.6 M1566.6,499.9 V518.1 M1568.5,499.7 V517.8 M1570.4,499.6 V514.1 M1572.3,499.4 V514.3 M1574.2,499.2 V514.5 M1576.1,498.9 V514.1 M1578.0,497.7 V516.2 M1579.9,496.4 V514.2 M1581.8,495.1 V515.1 M1583.7,491.0 V513.3 M1585.6,486.6 V517.9 M1587.5,482.2 V514.6 M1589.4,477.7 V515.1 M1591.3,473.3 V515.8 M1593.2,468.9 V517.7 M1595.1,466.6 V514.8 M1597.0,465.8 V517.7 M1598.9,465.0 V515.2 M1600.8,462.8 V515.3 M1602.7,460.6 V515.2 M1604.6,463.2 V512.1" stroke="#fff" stroke-opacity="0.42" stroke-width="0.9"/><path d="M1413.0,307.0 L1414.5,303.0 L1416.0,298.0 L1419.0,295.5 L1422.0,298.0 L1425.0,296.0 L1428.0,294.5 L1431.0,297.0 L1434.0,298.0 L1437.0,295.5 L1440.0,296.0 L1441.5,297.0 L1441.5,326.0 L1440.0,334.0 M1465.0,345.0 L1464.5,401.0 M1485.5,436.0 L1485.8,470.0 M1515.0,522.0 L1521.0,487.0 M1534.0,420.8 L1534.0,500.0 M1545.7,426.0 L1545.7,500.0 M1550.0,485.0 L1550.0,500.0 M1557.6,452.0 L1557.6,500.0 M1569.2,452.7 L1569.2,500.0 M1583.0,450.5 L1583.0,500.0 M1598.5,437.0 L1598.5,500.0 M1600.5,439.0 L1600.5,500.0 M1604.0,454.0 L1604.0,500.0" fill="none" stroke="#27a8cd" stroke-width="1.6" stroke-linejoin="round"/><path d="M1413.0,307.0h0M1414.5,303.0h0M1416.0,298.0h0M1419.0,295.5h0M1422.0,298.0h0M1425.0,296.0h0M1428.0,294.5h0M1431.0,297.0h0M1434.0,298.0h0M1437.0,295.5h0M1440.0,296.0h0M1441.5,297.0h0M1441.5,326.0h0M1413.0,305.0h0M1416.0,300.0h0M1420.0,297.0h0M1434.0,296.0h0M1438.5,335.7h0M1440.5,334.4h0M1442.5,334.0h0M1444.5,333.1h0M1446.5,334.1h0M1448.5,334.1h0M1450.5,333.8h0M1452.5,334.2h0M1454.5,333.2h0M1456.5,333.6h0M1458.5,332.9h0M1460.5,333.4h0M1462.5,334.2h0M1464.5,335.2h0M1438.5,349.4h0M1440.5,350.5h0M1442.5,352.0h0M1444.5,353.3h0M1446.5,353.5h0M1448.5,353.7h0M1450.5,353.8h0M1452.5,351.7h0M1454.5,352.2h0M1456.5,351.6h0M1458.5,352.0h0M1460.5,352.5h0M1462.5,353.0h0M1464.5,353.0h0M1464.5,401.0h0M1462.0,408.5h0M1464.0,408.1h0M1466.0,407.2h0M1468.0,406.5h0M1470.0,406.4h0M1472.0,405.3h0M1474.0,402.0h0M1476.0,400.9h0M1478.0,402.3h0M1480.0,408.9h0M1482.0,409.7h0M1484.0,411.1h0M1486.0,412.9h0M1462.0,431.7h0M1464.0,433.9h0M1466.0,435.3h0M1468.0,434.9h0M1470.0,435.8h0M1472.0,436.0h0M1474.0,437.1h0M1476.0,437.3h0M1478.0,437.2h0M1480.0,438.1h0M1482.0,436.6h0M1484.0,436.9h0M1486.0,436.7h0M1485.5,448.0h0M1485.8,453.0h0M1486.0,458.0h0M1485.0,464.0h0M1485.5,470.0h0M1484.0,469.5h0M1485.6,473.2h0M1487.2,475.3h0M1488.8,476.3h0M1490.4,476.8h0M1492.0,478.1h0M1493.6,480.2h0M1495.2,481.0h0M1496.8,483.5h0M1498.4,485.2h0M1500.0,487.1h0M1501.6,488.2h0M1503.2,490.1h0M1504.8,491.5h0M1506.4,492.4h0M1508.0,494.2h0M1509.6,491.2h0M1511.2,489.9h0M1512.8,486.6h0M1514.4,487.7h0M1484.0,536.5h0M1485.8,537.5h0M1487.6,539.4h0M1489.4,541.0h0M1491.2,540.9h0M1493.0,542.4h0M1494.8,542.4h0M1496.6,542.2h0M1498.4,542.0h0M1500.2,542.9h0M1502.0,541.8h0M1503.8,541.8h0M1505.6,541.9h0M1507.4,542.4h0M1509.2,540.5h0M1511.0,540.3h0M1512.8,539.8h0M1484.0,480.0h0M1484.5,492.0h0M1485.0,508.0h0M1484.5,522.0h0M1520.0,491.8h0M1521.6,482.1h0M1523.2,475.1h0M1524.8,483.3h0M1526.4,488.8h0M1528.0,490.4h0M1529.6,492.4h0M1531.2,494.4h0M1532.8,493.9h0M1534.4,495.2h0M1536.0,494.6h0M1537.6,494.3h0M1539.2,493.8h0M1540.8,493.1h0M1542.4,493.7h0M1544.0,493.7h0M1545.6,495.4h0M1547.2,494.8h0M1548.8,494.9h0M1550.4,494.8h0M1552.0,494.3h0M1553.6,494.3h0M1555.2,493.3h0M1556.8,493.2h0M1558.4,494.0h0M1560.0,494.4h0M1561.6,495.4h0M1563.2,495.2h0M1564.8,497.4h0M1566.4,497.2h0M1568.0,496.1h0M1569.6,496.1h0M1571.2,496.2h0M1572.8,496.0h0M1574.4,495.4h0M1576.0,496.7h0M1577.6,495.9h0M1579.2,493.8h0M1580.8,492.8h0M1582.4,490.2h0M1584.0,486.5h0M1585.6,483.3h0M1587.2,479.4h0M1588.8,476.8h0M1590.4,471.7h0M1592.0,467.7h0M1593.6,465.8h0M1595.2,463.6h0M1596.8,462.2h0M1598.4,462.3h0M1600.0,459.9h0M1601.6,458.9h0M1603.2,457.9h0M1604.8,462.3h0M1520.0,530.4h0M1521.8,533.1h0M1523.6,536.1h0M1525.4,536.7h0M1527.2,538.9h0M1529.0,539.5h0M1530.8,540.3h0M1532.6,538.7h0M1534.4,537.8h0M1536.2,538.3h0M1538.0,538.0h0M1539.8,538.6h0M1541.6,539.4h0M1543.4,540.3h0M1545.2,541.1h0M1547.0,539.8h0M1548.8,539.2h0M1550.6,537.6h0M1552.4,536.2h0M1554.2,536.6h0M1556.0,537.6h0M1557.8,538.0h0M1559.6,539.3h0M1561.4,539.8h0M1563.2,538.6h0M1565.0,539.4h0M1566.8,539.3h0M1568.6,539.1h0M1570.4,537.7h0M1572.2,537.2h0M1574.0,537.1h0M1575.8,536.8h0M1577.6,536.6h0M1579.4,537.3h0M1581.2,538.2h0M1583.0,538.6h0M1584.8,538.4h0M1586.6,539.3h0M1588.4,540.1h0M1590.2,539.1h0M1592.0,540.1h0M1593.8,540.3h0M1595.6,539.9h0M1597.4,539.6h0M1599.2,538.1h0M1601.0,536.1h0M1602.8,536.0h0M1604.6,533.7h0M1534.0,420.8h0M1534.0,428.0h0M1534.0,440.0h0M1534.0,463.0h0M1545.7,426.0h0M1545.7,468.0h0M1545.7,471.0h0M1550.0,485.0h0M1557.6,452.0h0M1557.6,466.0h0M1557.6,481.0h0M1569.2,452.7h0M1569.2,460.0h0M1569.2,467.0h0M1583.0,450.5h0M1598.5,437.0h0M1600.5,439.0h0M1600.5,445.0h0M1604.0,454.0h0M1604.0,470.0h0" stroke="#27a8cd" stroke-width="5" stroke-linecap="round"/><path d="M1413,300.9 H1515 M1520,300.9 H1604" stroke="#454a7c" stroke-width="6" stroke-linecap="round"/><circle cx="1450" cy="345.2" r="2.8" fill="#454a7c"/><path d="M1413,606.7 H1515 M1520,606.7 H1604" stroke="#5cbf86" stroke-width="6" stroke-linecap="round"/><g font-family="Liberation Sans" font-size="12" fill="#222"><path d="M1696,326.5 H1832" stroke="#e4e4e4" stroke-width="1"/><path d="M1696,390.5 H1832" stroke="#e4e4e4" stroke-width="1"/><path d="M1696,453.5 H1832" stroke="#e4e4e4" stroke-width="1"/><path d="M1696,517.5 H1832" stroke="#e4e4e4" stroke-width="1"/><path d="M1696,580.5 H1832" stroke="#e4e4e4" stroke-width="1"/><path d="M1752.2,319 V609" stroke="#e4e4e4" stroke-width="1"/><text x="1693.5" y="330.1" text-anchor="end">20</text><text x="1693.5" y="393.5" text-anchor="end">10</text><text x="1693.5" y="456.9" text-anchor="end">0</text><text x="1693.5" y="520.3" text-anchor="end">-10</text><text x="1693.5" y="583.7" text-anchor="end">-20</text><text x="1752.3" y="625.8" text-anchor="middle">March</text></g><path d="M1695.5,319 V610" stroke="#333" stroke-width="1"/><path d="M1714.0,440.0 L1718.0,436.0 L1722.0,426.0 L1724.0,405.0 L1726.0,388.0 L1728.3,380.0 L1728.3,320.0 L1733.1,320.0 L1733.1,354.0 L1739.0,351.0 L1739.0,414.0 L1742.0,430.0 L1745.5,445.0 L1745.5,350.0 L1748.5,350.0 L1748.5,337.0 L1752.0,337.0 L1752.0,369.0 L1755.3,383.0 L1757.0,403.0 L1759.8,381.0 L1761.3,357.0 L1766.0,337.0 L1767.5,338.0 L1767.5,606.0 L1764.0,609.0 L1760.0,607.0 L1756.0,610.0 L1752.0,606.0 L1748.0,609.0 L1745.7,600.0 L1745.7,541.0 L1738.0,540.0 L1730.0,540.0 L1730.0,482.0 L1726.0,476.0 L1720.0,478.0 L1714.0,474.0 Z M1774.0,420.0 L1776.0,397.0 L1777.6,375.0 L1779.9,344.0 L1781.0,332.0 L1783.5,332.0 L1784.0,368.0 L1786.5,376.0 L1788.0,428.0 L1789.8,355.0 L1791.5,355.0 L1791.5,383.0 L1795.5,366.0 L1797.0,350.0 L1798.8,350.0 L1799.5,342.0 L1801.0,342.0 L1801.5,431.0 L1803.0,431.0 L1805.0,409.0 L1808.0,388.0 L1810.0,347.0 L1814.0,347.0 L1815.0,449.0 L1817.0,449.0 L1818.5,365.0 L1822.0,371.0 L1825.0,394.0 L1828.0,354.0 L1830.5,346.0 L1833.3,346.0 L1833.3,380.0 L1833.3,600.0 L1830.0,606.0 L1824.0,609.0 L1818.0,607.0 L1812.0,606.0 L1806.0,604.0 L1800.0,608.0 L1795.0,605.0 L1790.0,607.0 L1785.0,604.0 L1780.0,609.0 L1776.0,606.0 L1772.0,604.0 L1771.7,575.0 L1773.5,565.0 Z" fill="#27a8cd"/><path d="M1695.5,430.0 L1698.0,425.0 L1701.0,422.0 L1704.0,421.5 L1707.0,423.0 L1710.0,422.0 L1713.0,421.0 L1716.0,424.0 L1717.0,417.0 L1716.5,440.0 M1719.7,476.0 L1719.7,494.0 M1768.0,590.0 L1772.0,572.0" fill="none" stroke="#27a8cd" stroke-width="1.6" stroke-linejoin="round"/><path d="M1695.5,430.0h0M1698.0,425.0h0M1701.0,422.0h0M1704.0,421.5h0M1707.0,423.0h0M1710.0,422.0h0M1713.0,421.0h0M1716.0,424.0h0M1717.0,417.0h0M1697.0,428.0h0M1700.0,423.0h0M1714.0,439.9h0M1715.7,437.8h0M1717.4,435.8h0M1719.1,433.7h0M1720.8,428.5h0M1722.5,420.7h0M1724.2,403.7h0M1725.9,388.9h0M1727.6,382.2h0M1729.3,320.0h0M1731.0,320.1h0M1732.7,320.5h0M1734.4,352.7h0M1736.1,352.6h0M1737.8,351.2h0M1739.5,416.3h0M1741.2,426.2h0M1742.9,433.9h0M1744.6,441.2h0M1746.3,350.4h0M1748.0,350.7h0M1749.7,336.9h0M1751.4,337.2h0M1753.1,373.7h0M1754.8,380.9h0M1756.5,397.4h0M1758.2,393.5h0M1759.9,379.5h0M1761.6,355.7h0M1763.3,349.2h0M1765.0,341.6h0M1766.7,338.1h0M1714.0,475.0h0M1715.7,474.6h0M1717.4,476.4h0M1719.1,478.4h0M1720.8,478.5h0M1722.5,476.4h0M1724.2,475.8h0M1725.9,475.9h0M1727.6,477.5h0M1729.3,480.4h0M1731.0,539.1h0M1732.7,540.4h0M1734.4,540.6h0M1736.1,540.9h0M1737.8,539.2h0M1739.5,540.7h0M1741.2,540.8h0M1742.9,539.9h0M1744.6,541.7h0M1746.3,603.4h0M1748.0,608.4h0M1749.7,608.7h0M1751.4,606.2h0M1753.1,607.1h0M1754.8,609.9h0M1756.5,610.4h0M1758.2,607.6h0M1759.9,606.9h0M1761.6,607.8h0M1763.3,608.3h0M1765.0,607.5h0M1766.7,606.3h0M1724.0,408.0h0M1725.0,399.0h0M1726.0,389.0h0M1730.0,320.0h0M1737.5,351.0h0M1747.2,351.0h0M1750.2,337.0h0M1719.7,494.0h0M1774.0,420.4h0M1775.7,399.7h0M1777.4,377.8h0M1779.1,354.7h0M1780.8,333.4h0M1782.5,331.7h0M1784.2,368.8h0M1785.9,374.1h0M1787.6,413.4h0M1789.3,376.1h0M1791.0,355.5h0M1792.7,378.7h0M1794.4,370.0h0M1796.1,359.2h0M1797.8,349.3h0M1799.5,342.4h0M1801.2,377.2h0M1802.9,430.4h0M1804.6,413.3h0M1806.3,400.6h0M1808.0,388.5h0M1809.7,352.8h0M1811.4,346.4h0M1813.1,347.7h0M1814.8,428.7h0M1816.5,449.3h0M1818.2,381.1h0M1819.9,366.7h0M1821.6,370.6h0M1823.3,380.8h0M1825.0,393.3h0M1826.7,372.0h0M1828.4,352.9h0M1830.1,347.8h0M1831.8,345.3h0M1773.5,605.5h0M1775.2,604.6h0M1776.9,607.5h0M1778.6,607.8h0M1780.3,608.3h0M1782.0,607.1h0M1783.7,606.2h0M1785.4,603.7h0M1787.1,604.4h0M1788.8,606.3h0M1790.5,606.2h0M1792.2,605.3h0M1793.9,604.7h0M1795.6,604.4h0M1797.3,605.7h0M1799.0,607.0h0M1800.7,607.1h0M1802.4,607.0h0M1804.1,604.8h0M1805.8,604.1h0M1807.5,603.8h0M1809.2,604.7h0M1810.9,604.6h0M1812.6,605.6h0M1814.3,605.3h0M1816.0,607.2h0M1817.7,607.1h0M1819.4,606.8h0M1821.1,608.0h0M1822.8,609.6h0M1824.5,607.9h0M1826.2,608.6h0M1827.9,606.9h0M1829.6,606.2h0M1831.3,604.4h0M1833.0,600.3h0M1782.3,332.0h0M1797.8,350.0h0M1812.5,347.0h0M1830.5,346.0h0M1828.0,354.0h0M1795.5,366.0h0M1789.0,403.0h0" stroke="#27a8cd" stroke-width="5" stroke-linecap="round"/><defs><linearGradient id="spg" gradientUnits="userSpaceOnUse" x1="0" y1="546" x2="0" y2="632"><stop offset="0" stop-color="#5ea7b3"/><stop offset="1" stop-color="#e4f1f3"/></linearGradient></defs><path d="M1215.2,563.8 L1215.2,550.0 L1216.0,547.0 L1218.0,545.5 L1221.0,546.5 L1224.0,545.0 L1227.0,546.0 L1230.0,545.5 L1233.3,546.0 L1234.6,560.0 L1240.0,560.5 L1244.0,560.0 L1249.0,560.8 L1249.0,583.5 L1252.0,584.0 L1255.0,580.5 L1258.0,585.0 L1261.0,587.0 L1262.0,600.0 L1263.5,606.0 L1268.0,609.0 L1273.0,613.0 L1279.0,611.0 L1283.0,604.0 L1286.0,607.0 L1290.8,618.0 L1292.0,589.0 L1294.0,589.0 L1296.0,614.0 L1299.5,591.0 L1301.5,591.0 L1303.0,610.0 L1306.4,617.0 L1307.0,600.0 L1309.0,600.0 L1311.0,613.0 L1314.5,600.0 L1316.5,600.0 L1318.0,617.0 L1322.0,603.0 L1324.4,599.5 L1327.0,610.0 L1331.0,601.0 L1334.7,594.5 L1338.0,600.0 L1338.0,563.8 Z" fill="url(#spg)"/><path d="M1215.2,550.0 L1216.0,547.0 L1218.0,545.5 L1221.0,546.5 L1224.0,545.0 L1227.0,546.0 L1230.0,545.5 L1233.3,546.0" fill="none" stroke="#0b7f8b" stroke-width="2.4"/><path d="M1232.3,546.0 L1234.6,546.0 L1234.6,560.0 L1240.0,560.5 L1244.0,560.0 L1249.0,560.8 L1249.0,583.5 L1252.0,584.0 L1255.0,580.5 L1258.0,585.0 L1261.0,587.0 L1262.0,600.0 L1261.0,594.5 L1256.0,593.0 L1251.0,594.0 L1246.8,592.5 L1246.8,566.5 L1241.0,565.5 L1236.0,566.0 L1232.3,565.0 Z M1261.0,587.0 L1262.0,600.0 L1263.5,606.0 L1268.0,609.0 L1273.0,613.0 L1279.0,611.0 L1283.0,604.0 L1286.0,607.0 L1290.8,618.0 L1292.0,589.0 L1294.0,589.0 L1296.0,614.0 L1299.5,591.0 L1301.5,591.0 L1303.0,610.0 L1306.4,617.0 L1307.0,600.0 L1309.0,600.0 L1311.0,613.0 L1314.5,600.0 L1316.5,600.0 L1318.0,617.0 L1322.0,603.0 L1324.4,599.5 L1327.0,610.0 L1331.0,601.0 L1334.7,594.5 L1338.0,600.0 L1338.0,627.0 L1330.0,629.0 L1320.0,630.0 L1310.0,629.0 L1300.0,630.0 L1290.0,628.5 L1280.0,630.0 L1272.0,629.0 L1265.0,630.0 L1261.0,626.0 Z" fill="#0b7f8b" stroke="#0b7f8b" stroke-width="0.8" stroke-linejoin="round"/><defs><clipPath id="bcl"><rect x="1200" y="740" width="252" height="340"/></clipPath></defs><g font-family="Liberation Sans" font-size="12" fill="#222"><path d="M1246,812.5 H1452" stroke="#e4e4e4" stroke-width="1"/><text x="1243.5" y="817.1" text-anchor="end">2.5k</text><path d="M1246,864.5 H1452" stroke="#e4e4e4" stroke-width="1"/><text x="1243.5" y="868.7" text-anchor="end">2k</text><path d="M1246,915.5 H1452" stroke="#e4e4e4" stroke-width="1"/><text x="1243.5" y="920.3" text-anchor="end">1.5k</text><path d="M1246,967.5 H1452" stroke="#e4e4e4" stroke-width="1"/><text x="1243.5" y="971.9" text-anchor="end">1k</text><path d="M1246,1018.5 H1452" stroke="#e4e4e4" stroke-width="1"/><text x="1243.5" y="1023.5" text-anchor="end">500</text><text x="1243.5" y="1075.1" text-anchor="end">0</text><path d="M1340.8,774 V1070" stroke="#e4e4e4" stroke-width="1"/></g><g clip-path="url(#bcl)"><rect x="1247.0" y="1062.9" width="13.3" height="7.7" fill="#5bbbd6"/><rect x="1261.5" y="1053.7" width="13.3" height="16.9" fill="#5bbbd6"/><rect x="1276.0" y="1050.5" width="13.3" height="20.1" fill="#5bbbd6"/><rect x="1290.5" y="1050.3" width="13.3" height="20.3" fill="#5bbbd6"/><rect x="1305.0" y="1050.3" width="13.3" height="20.3" fill="#5bbbd6"/><rect x="1319.5" y="1050.3" width="13.3" height="20.3" fill="#5bbbd6"/><rect x="1334.0" y="1054.8" width="13.3" height="15.8" fill="#5bbbd6"/><rect x="1348.5" y="965.9" width="13.3" height="104.7" fill="#5bbbd6"/><rect x="1363.0" y="798.7" width="13.3" height="271.9" fill="#5bbbd6"/><rect x="1377.5" y="813.1" width="13.3" height="257.5" fill="#5bbbd6"/><rect x="1392.0" y="790.4" width="13.3" height="280.2" fill="#5bbbd6"/><rect x="1406.5" y="802.8" width="13.3" height="267.8" fill="#5bbbd6"/><rect x="1421.0" y="773.9" width="13.3" height="296.7" fill="#5bbbd6"/><rect x="1435.5" y="772.9" width="13.3" height="297.7" fill="#5bbbd6"/><rect x="1450.0" y="922.5" width="13.3" height="148.1" fill="#5bbbd6"/><g font-family="Liberation Sans" font-size="12" fill="#222"><text x="1253.7" y="1058.4" text-anchor="middle">70</text><text x="1268.2" y="1049.2" text-anchor="middle">159</text><text x="1282.7" y="1046.0" text-anchor="middle">190</text><text x="1297.2" y="1045.8" text-anchor="middle">192</text><text x="1311.7" y="1045.8" text-anchor="middle">192</text><text x="1326.2" y="1045.8" text-anchor="middle">192</text><text x="1340.7" y="1050.3" text-anchor="middle">148</text><text x="1355.2" y="961.4" text-anchor="middle">1.01k</text><text x="1369.7" y="794.2" text-anchor="middle">2.63k</text><text x="1384.2" y="808.6" text-anchor="middle">2.49k</text><text x="1398.7" y="785.9" text-anchor="middle">2.71k</text><text x="1413.2" y="798.3" text-anchor="middle">2.59k</text><text x="1427.7" y="769.4" text-anchor="middle">2.87k</text><text x="1442.2" y="768.4" text-anchor="middle">2.88k</text><text x="1456.7" y="918.0" text-anchor="middle">1.43k</text></g></g><path d="M1245.5,774 V1071" stroke="#333" stroke-width="1"/></svg><svg style="left:0;top:0" width="1915" height="1077" viewBox="0 0 1915 1077"><defs><clipPath id="tcl"><rect x="1515" y="735" width="192" height="345"/></clipPath></defs><g clip-path="url(#tcl)"><rect x="1693.5" y="834.5" width="20" height="205" fill="#fffbee"/><path d="M1521.5,740.5 H1710 M1619.5,783.5 H1710 M1521.5,809.5 H1710 M1521.5,834.5 H1710" stroke="#dcdcdc" stroke-width="1" fill="none"/><path d="M1582.5,860.5 H1710" stroke="#dcdcdc" stroke-width="1" fill="none"/><path d="M1582.5,886.5 H1710" stroke="#dcdcdc" stroke-width="1" fill="none"/><path d="M1582.5,912.5 H1710" stroke="#dcdcdc" stroke-width="1" fill="none"/><path d="M1582.5,938.5 H1710" stroke="#dcdcdc" stroke-width="1" fill="none"/><path d="M1582.5,963.5 H1710" stroke="#dcdcdc" stroke-width="1" fill="none"/><path d="M1582.5,989.5 H1710" stroke="#dcdcdc" stroke-width="1" fill="none"/><path d="M1582.5,1015.5 H1710" stroke="#dcdcdc" stroke-width="1" fill="none"/><path d="M1521.5,1039.5 H1710 M1521.5,1067.5 H1710" stroke="#dcdcdc" stroke-width="1" fill="none"/><path d="M1521.5,740.5 V1067.5 M1619.5,740.5 V834.5 M1693.5,740.5 V1067.5 M1582.5,809.5 V1039.5" stroke="#dcdcdc" stroke-width="1" fill="none"/><g font-family="Liberation Sans" font-size="12.6" fill="#333"><text x="1624.7" y="766">Metric</text><text x="1624.7" y="800.3" textLength="63" lengthAdjust="spacingAndGlyphs">ControlUnit</text><text x="1542.6" y="825.8">Date</text><text x="1587.7" y="825.8">Hour</text><text x="1542.6" y="850.7">2025-</text><text x="1526.4" y="867.6">02-24</text><text x="1697.5" y="756.5">Ajtó</text><text x="1697.5" y="774">nyitás</text><text x="1697.5" y="803.6">Kamra</text><text x="1697.5" y="820.5">8</text><text x="1588" y="850.7">13:00</text><text x="1588" y="876.7">14:00</text><text x="1588" y="902.6">15:00</text><text x="1588" y="928.6">16:00</text><text x="1588" y="954.5">17:00</text><text x="1588" y="980.5">18:00</text><text x="1588" y="1006.4">19:00</text><text x="1588" y="1032.4">20:00</text><text x="1688" y="1056.5" text-anchor="end" font-weight="700">Total (Sum)</text><text x="1702" y="1056.5" fill="#1a5fa0">1</text></g><rect x="1526.5" y="815.8" width="10" height="10" fill="none" stroke="#999" stroke-width="1.2" rx="1"/><path d="M1529,820.8 H1534" stroke="#999" stroke-width="1.2"/><rect x="1526.5" y="840.8" width="10" height="10" fill="none" stroke="#999" stroke-width="1.2" rx="1"/><path d="M1529,845.8 H1534" stroke="#999" stroke-width="1.2"/></g><g fill="#8a8a8a"><path d="M1710,747.8 L1714.5,741 L1719,747.8 Z"/><rect x="1710" y="753.8" width="9" height="17" rx="4.5"/><path d="M1710,1057 L1714.5,1063.6 L1719,1057 Z"/><path d="M1528,1071 L1521.5,1075 L1528,1079 Z"/><rect x="1535.3" y="1071" width="101.4" height="9" rx="4.5"/><path d="M1695.4,1071 L1702,1075 L1695.4,1079 Z"/></g></svg></body></html>
